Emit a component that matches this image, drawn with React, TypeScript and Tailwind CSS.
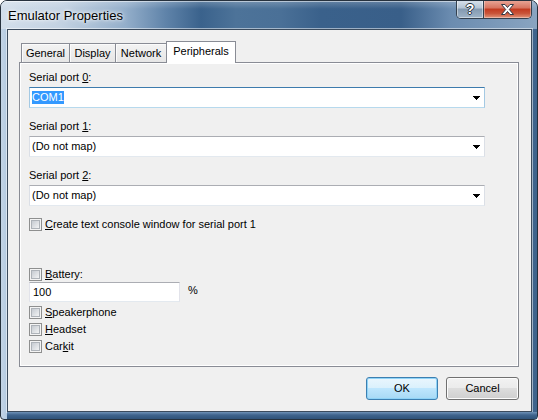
import clsx from "clsx";

const ui = "font-['Liberation_Sans',Arial,sans-serif] text-[11px] leading-[15px] text-black";

function Tab({ label, width, active }: { label: string; width: string; active?: boolean }) {
  return (
    <div
      className={clsx(
        "flex justify-center pt-[2px] -ml-px first:ml-0",
        width,
        active
          ? "h-[22px] border-x border-t border-[#898c95] bg-white relative z-10"
          : "h-[20px] border border-[#898c95] bg-[linear-gradient(180deg,#f3f3f3,#e6e6e6)] shadow-[inset_1px_1px_0_#fbfbfb]"
      )}
    >
      {label}
    </div>
  );
}

function Combo({ focused, children }: { focused?: boolean; children: React.ReactNode }) {
  return (
    <div
      className={clsx(
        "flex items-center h-[21px] w-[456px] bg-white border pl-[2px] pr-[4px]",
        focused
          ? "border-[#a4c9e3] border-t-[#3d7bad] border-b-[#b7d9ed]"
          : "border-[#dbdfe6] border-t-[#abadb3] border-b-[#e3e9ef]"
      )}
    >
      <div className="flex-1 flex">{children}</div>
      <svg width="7" height="4" viewBox="0 0 7 4" shapeRendering="crispEdges">
        <path d="M0 0h7v1h-1v1h-1v1h-1v1h-1v-1h-1v-1h-1v-1h-1z" fill="#000" />
      </svg>
    </div>
  );
}

function Box() {
  return (
    <div className="w-[13px] h-[13px] shrink-0 border border-[#8e8f8f] bg-[#f4f4f4] p-px">
      <div className="w-full h-full border border-[#aeb3b9] bg-[linear-gradient(135deg,#c6cbd1,#f2f3f4)]" />
    </div>
  );
}

function CheckRow({ children, className }: { children: React.ReactNode; className?: string }) {
  return (
    <div className={clsx("flex items-center h-[17px] gap-[3px]", className)}>
      <Box />
      <span>{children}</span>
    </div>
  );
}

function Label({ children, className }: { children: React.ReactNode; className?: string }) {
  return <div className={clsx("h-[15px]", className)}>{children}</div>;
}

export default function App() {
  return (
    <div className={clsx("w-[538px] h-[420px]", ui)}>
      <div className="flex flex-col w-[538px] h-[420px] overflow-hidden rounded-t-[7px] rounded-b-[4px] border border-[#26313d] bg-[linear-gradient(90deg,#c3d4e6_0px,#b3cae1_6px,#7393b6_50%,#3e638c_100%)]">
        {/* title bar */}
        <div className="flex justify-between h-[28px] shrink-0 shadow-[inset_0_1px_0_rgba(255,255,255,0.5)] bg-[linear-gradient(180deg,rgba(255,255,255,0.22)_0px,rgba(255,255,255,0)_8px),linear-gradient(90deg,#d2deea_0px,#c3d2e2_60px,#93aeca_125px,#5f83a9_165px,#3a628c_200px,#4d7399_235px,#4a7097_280px,#3a618b_320px,#395f89_400px,#6b8cb0_450px,#8aa5c1_538px)]">
          <div className="flex items-center pl-[7px] font-['Liberation_Sans',Arial,sans-serif] text-[13px] [text-shadow:0_0_6px_#fff,0_0_3px_#fff]">
            Emulator Properties
          </div>
          <div className="flex h-[19px] mr-[5px] -mt-px border border-t-0 border-[#33404e] rounded-b-[5px] overflow-hidden">
            <div className="flex items-center justify-center w-[26px] bg-[linear-gradient(180deg,#dbe4ee_0%,#b4c4d4_45%,#8399b0_50%,#9fb4c8_100%)] shadow-[inset_0_0_0_1px_rgba(255,255,255,0.45)] font-['Liberation_Sans',Arial,sans-serif] font-bold text-[14px] leading-none text-white [text-shadow:1px_0_#2b3540,-1px_0_#2b3540,0_1px_#2b3540,0_-1px_#2b3540]">
              ?
            </div>
            <div className="flex items-center justify-center w-[48px] border-l border-[#33404e] bg-[linear-gradient(180deg,#eaa99b_0%,#d7735f_45%,#c2391f_50%,#c9553a_75%,#e2957a_100%)] shadow-[inset_0_0_0_1px_rgba(255,255,255,0.35)]">
              <svg width="13" height="11" viewBox="0 0 13 11">
                <path
                  d="M0.5 0.5h3.5l2.5 3 2.5-3h3.5l-4.2 5 4.2 5h-3.5l-2.5-3-2.5 3h-3.5l4.2-5z"
                  fill="#fff"
                  stroke="#2f3845"
                  strokeWidth="1"
                  strokeLinejoin="round"
                />
              </svg>
            </div>
          </div>
        </div>

        {/* client area */}
        <div className="flex flex-col ml-[6px] mr-[5px] h-[383px] shrink-0 border border-[#3b4b5d] bg-[#f0f0f0] shadow-[0_0_0_1px_rgba(255,255,255,0.5)] pt-[11px] pl-[11px]">
          <div className="flex items-end h-[22px] ml-[2px] -mb-px relative z-10">
            <Tab label="General" width="w-[49px]" />
            <Tab label="Display" width="w-[47px]" />
            <Tab label="Network" width="w-[52px]" />
            <Tab label="Peripherals" width="w-[70px]" active />
          </div>

          <div className="flex flex-col w-[500px] h-[305px] border border-[#898c95] bg-[#f0f0f0] shadow-[inset_0_0_0_1px_#fff] pl-[9px] pt-[7px]">
            <Label>
              Serial port <u>0</u>:
            </Label>
            <div className="mt-[2px]">
              <Combo focused>
                <span className="bg-[#3399ff] text-white leading-[13px]">COM1</span>
              </Combo>
            </div>

            <Label className="mt-[11px]">
              Serial port <u>1</u>:
            </Label>
            <div className="mt-[2px]">
              <Combo>(Do not map)</Combo>
            </div>

            <Label className="mt-[11px]">
              Serial port <u>2</u>:
            </Label>
            <div className="mt-[2px]">
              <Combo>(Do not map)</Combo>
            </div>

            <CheckRow className="mt-[10px]">
              <u>C</u>reate text console window for serial port 1
            </CheckRow>

            <CheckRow className="mt-[33px]">
              <u>B</u>attery:
            </CheckRow>
            <div className="flex items-center -mt-px">
              <div className="flex items-center w-[151px] h-[20px] bg-white border border-[#e2e3ea] border-t-[#abadb3] border-b-[#e3e9ef] pl-[3px]">
                100
              </div>
              <span className="ml-[8px] -mt-[3px]">%</span>
            </div>

            <CheckRow className="mt-[2px]">
              <u>S</u>peakerphone
            </CheckRow>
            <CheckRow>
              <u>H</u>eadset
            </CheckRow>
            <CheckRow>
              Car<u>k</u>it
            </CheckRow>
          </div>

          <div className="flex justify-end gap-[8px] mt-[10px] pr-[12px]">
            <button className="flex items-center justify-center w-[72px] h-[23px] rounded-[3px] border border-[#3c7fb1] bg-[linear-gradient(180deg,#eaf6fd_0%,#d9f0fc_50%,#bee6fd_50%,#a7d9f5_100%)] shadow-[inset_0_0_0_1px_#8fd3f7]">
              OK
            </button>
            <button className="flex items-center justify-center w-[73px] h-[23px] rounded-[3px] border border-[#707070] bg-[linear-gradient(180deg,#f2f2f2_0%,#ebebeb_50%,#dddddd_50%,#cfcfcf_100%)] shadow-[inset_0_0_0_1px_#fcfcfc]">
              Cancel
            </button>
          </div>
        </div>

        {/* bottom frame */}
        <div className="flex-1 ml-[6px] bg-[linear-gradient(180deg,#6f92b8_0px,#3f648d_3px,#2f5279_100%)]" />
      </div>
    </div>
  );
}
